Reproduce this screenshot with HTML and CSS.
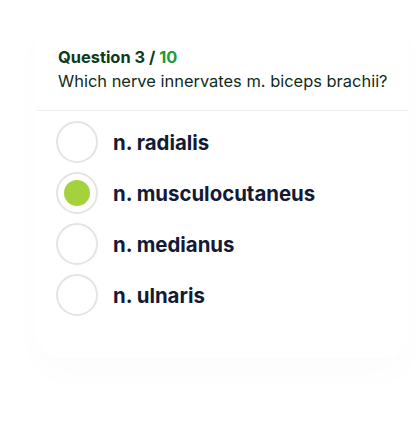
FILE: index.html
```html
<!DOCTYPE html>
<html>
<head>
<meta charset="utf-8">
<link rel="stylesheet" href="styles.css">
</head>
<body>
<div class="card">
  <div class="header">
    <div class="counter">Question 3 / <span class="total">10</span></div>
    <div class="question">Which nerve innervates m. biceps brachii?</div>
  </div>
  <ul class="options">
    <li class="option"><span class="radio"></span><span class="label">n. radialis</span></li>
    <li class="option selected"><span class="radio"></span><span class="label">n. musculocutaneus</span></li>
    <li class="option"><span class="radio"></span><span class="label">n. medianus</span></li>
    <li class="option"><span class="radio"></span><span class="label">n. ulnaris</span></li>
  </ul>
</div>
</body>
</html>
```

FILE: styles.css
```css
html, body {
  margin: 0;
  padding: 0;
  background: #ffffff;
}
body {
  font-family: Inter, "Noto Sans", sans-serif;
  padding: 24px 8px 0 36px;
  height: 424px;
  box-sizing: border-box;
}
.card {
  background: #ffffff;
  border-radius: 0 0 24px 24px;
  box-shadow: 0 16px 36px rgba(0, 0, 0, 0.015);
  padding-bottom: 42px;
}
.header {
  padding: 23px 0 18px 22px;
  border-bottom: 1.5px solid #f1f1f1;
}
.counter {
  font-size: 16.4px;
  font-weight: 700;
  color: #0c3a1c;
  line-height: 20px;
}
.total {
  color: #1d9b3a;
}
.question {
  font-size: 16.45px;
  color: #0f2b1a;
  line-height: 22px;
  margin-top: 3px;
}
.options {
  list-style: none;
  margin: 0;
  padding: 10px 0 0 20px;
  display: flex;
  flex-direction: column;
  gap: 9px;
}
.option {
  display: flex;
  align-items: center;
  gap: 15px;
  height: 42px;
}
.radio {
  width: 38px;
  height: 38px;
  border: 2px solid #e4e4e4;
  border-radius: 50%;
  display: flex;
  align-items: center;
  justify-content: center;
  flex: none;
}
.selected .radio::after {
  content: "";
  width: 26px;
  height: 26px;
  border-radius: 50%;
  background: #a3d23c;
}
.label {
  font-size: 20.4px;
  font-weight: 700;
  color: #131a36;
}
```
